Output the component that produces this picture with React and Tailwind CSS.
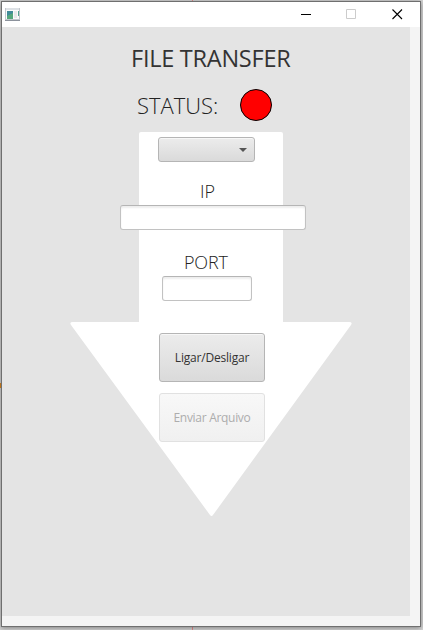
function TitleBar() {
  return (
    <header className="flex h-[25px] shrink-0 items-center justify-between bg-white">
      <svg className="ml-[3px]" width="16" height="14" viewBox="0 0 16 14" shapeRendering="crispEdges">
        <rect x="0" y="0" width="15" height="13" fill="#c3c7cd" />
        <rect x="1" y="0" width="13" height="2" fill="#dde1e5" />
        <rect x="1" y="2" width="13" height="9" fill="#fafafa" />
        <rect x="2" y="3" width="6" height="8" fill="#418b98" />
        <path d="M2 11V8l6-3v6z" fill="#55a77c" />
        <rect x="9" y="3" width="3" height="7" fill="#e7e9ea" />
        <rect x="13" y="3" width="1" height="5" fill="#55a390" />
        <rect x="0" y="12" width="15" height="1" fill="#8c929c" />
      </svg>
      <div className="mr-[17px] flex h-[25px] items-start pt-[7px]">
        <svg className="mr-[35px]" width="10" height="10" viewBox="0 0 10 10"><path d="M0 5.5H10" stroke="#000" /></svg>
        <svg className="mr-[36px]" width="10" height="10" viewBox="0 0 10 10"><path d="M.5 .5H9.5V9.5H.5Z" fill="none" stroke="#ccc" /></svg>
        <svg width="11" height="11" viewBox="0 0 11 11"><path d="M.5 .5L10 10M10 .5L.5 10" stroke="#000" strokeWidth="1.1" /></svg>
      </div>
    </header>
  );
}

export default function App() {
  return (
    <div className="relative h-[630px] w-[423px] overflow-hidden bg-[#d4d4d4] pt-px pl-px font-['Open_Sans','Noto_Sans',sans-serif] text-[#333]">
      <div className="absolute top-0 left-[192px] h-[630px] w-px bg-[#e58c8c]" />
      <div className="absolute top-[383px] left-0 h-[5px] w-px bg-[#e08a20]" />
      <main className="relative flex h-[626px] w-[420px] flex-col border border-[#6f6f6f] bg-[#f4f4f4] shadow-[0_1px_5px_rgba(0,0,0,0.4)]">
        <TitleBar />
        <section className="relative flex h-[589px] w-[408px] flex-col bg-[#e4e4e4]">
          <svg className="absolute top-[105px] left-[67px]" width="284" height="385" viewBox="0 0 284 385">
            <path
              d="M72 0H212Q214 0 214 2V190H280Q284 190 282 193L144 383Q142.500 385 141 383L2 193Q0 190 4 190H70V2Q70 0 72 0Z"
              fill="#fff"
            />
          </svg>
          <div className="relative flex flex-col">
            <h1 className="mt-[15px] ml-[129px] h-8 w-[170px] text-[23.5px] leading-8 tracking-[-0.25px] whitespace-nowrap">FILE TRANSFER</h1>
            <div className="mt-[15px] ml-[135px] flex h-8 items-center">
              <span className="w-[103px] text-[22px] leading-8 font-light text-[#222]">STATUS:</span>
              <span className="size-8 rounded-full border border-black bg-[#f00]" />
            </div>
            <button className="mt-[16px] ml-[156px] flex h-[25px] w-[97px] items-center justify-end rounded-[3px] border border-[#b5b5b5] bg-linear-to-b from-[#ececec] to-[#dadada] pr-[7px] shadow-[inset_0_1px_0_#f7f7f7]">
              <svg width="8" height="4" viewBox="0 0 8 4"><path d="M0 0H8L4 4Z" fill="#555" /></svg>
            </button>
            <label htmlFor="ip" className="mt-[16px] ml-[198px] h-[27px] text-[18px] leading-[26px] font-light text-[#222]">IP</label>
            <input id="ip" className="ml-[118px] h-[25px] w-[186px] rounded-[3px] border border-[#c2c2c2] border-t-[#b5b5b5] bg-white shadow-[inset_0_2px_2px_#eee]" />
            <label htmlFor="port" className="mt-[19px] ml-[182px] h-[27px] text-[18px] leading-[26px] font-light tracking-[-0.2px] text-[#222]">PORT</label>
            <input id="port" className="ml-[160px] h-[25px] w-[90px] rounded-[3px] border border-[#c2c2c2] border-t-[#b5b5b5] bg-white shadow-[inset_0_2px_2px_#eee]" />
            <button className="mt-[32px] ml-[157px] h-[49px] w-[106px] rounded-[3px] border border-[#b5b5b5] bg-linear-to-b from-[#ececec] to-[#dadada] text-[12px] tracking-[-0.2px] whitespace-nowrap shadow-[inset_0_1px_0_#f7f7f7]">Ligar/Desligar</button>
            <button disabled className="mt-[11px] ml-[157px] h-[49px] w-[106px] rounded-[3px] border border-[#e1e1e1] bg-linear-to-b from-[#f8f8f8] to-[#f0f0f0] text-[12px] tracking-[-0.3px] whitespace-nowrap text-[#adadad]">Enviar Arquivo</button>
          </div>
        </section>
      </main>
    </div>
  );
}
